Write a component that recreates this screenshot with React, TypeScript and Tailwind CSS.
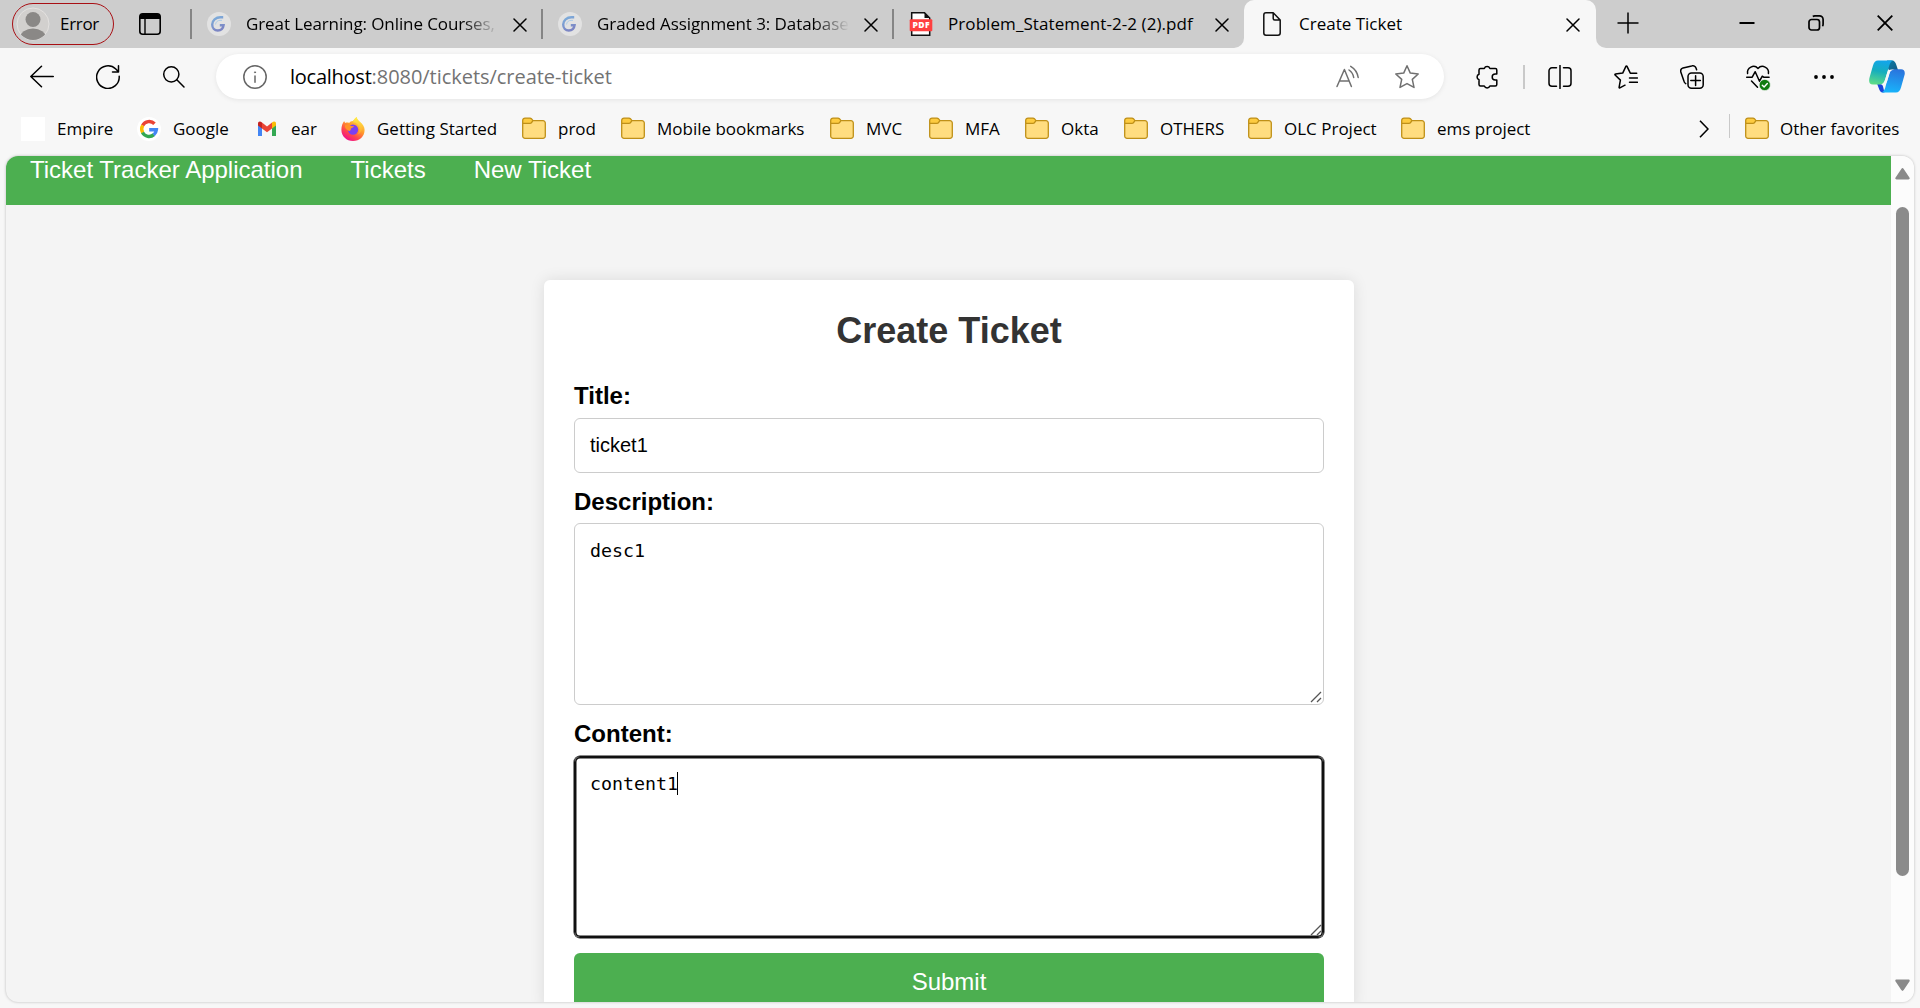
import type { ReactNode } from "react";

function Svg({ children, size = 24, className = "" }: { children: ReactNode; size?: number; className?: string }) {
  return (
    <svg
      width={size}
      height={size}
      viewBox="0 0 24 24"
      fill="none"
      stroke="currentColor"
      strokeWidth="1.5"
      strokeLinecap="round"
      strokeLinejoin="round"
      className={`shrink-0 ${className}`}
    >
      {children}
    </svg>
  );
}

function CloseIcon({ className = "" }: { className?: string }) {
  return (
    <svg width="14" height="14" viewBox="0 0 14 14" stroke="#000" strokeWidth="1.5" strokeLinecap="round" className={`shrink-0 ${className}`}>
      <path d="M1 1l12 12M13 1L1 13" />
    </svg>
  );
}

function LearningIcon() {
  return (
    <svg width="24" height="24" viewBox="0 0 24 24" fill="none" className="shrink-0">
      <defs>
        <linearGradient id="learn" x1="0" y1="0" x2="0.4" y2="1">
          <stop offset="0" stopColor="#7db0dc" />
          <stop offset="1" stopColor="#7c86c4" />
        </linearGradient>
      </defs>
      <circle cx="12" cy="12" r="12" fill="#e2e2e2" />
      <path d="M16.2 5.3h-2.800C8.800 5.300 5.200 8.600 5.200 12.600c0 3.600 2.400 5.900 5.600 5.900 3.600 0 5.400-2.200 5.800-5.300h-3.800" stroke="url(#learn)" strokeWidth="2.400" />
      <path d="M15 8.400h-2c-2.600 0-4.400 1.800-4.400 4.100" stroke="#a9cbe6" strokeWidth="0.900" />
    </svg>
  );
}

function PdfIcon() {
  return (
    <svg width="24" height="24" viewBox="0 0 24 24" className="shrink-0">
      <path d="M2.700 0.800H15.500L20.700 6V23.200H2.700Z" fill="#fff" stroke="#111" strokeWidth="1.500" />
      <path d="M15.500 0.800V6h5.200Z" fill="#111" />
      <rect x="0.700" y="7.300" width="22.600" height="12" rx="1" fill="#ff4040" />
      <text x="12" y="16.400" textAnchor="middle" fontSize="8.500" fontWeight="800" fill="#fff" className="font-['Open_Sans',sans-serif]" textLength="17">
        PDF
      </text>
    </svg>
  );
}

function FolderIcon() {
  return (
    <svg width="24" height="24" viewBox="0 0 24 24" className="shrink-0">
      <path d="M0.700 5.500V19a2.300 2.300 0 0 0 2.300 2.300h18a2.300 2.300 0 0 0 2.300-2.300V6a2.300 2.300 0 0 0-2.300-2.300H11L9.400 1.700A2 2 0 0 0 8 1.100H3A2.300 2.300 0 0 0 0.700 3.400Z" fill="#ffdd80" />
      <path d="M0.700 6.300V3.400A2.300 2.300 0 0 1 3 1.100h5a2 2 0 0 1 1.400.6l1.600 2-1.600 2a2 2 0 0 1-1.400.6Z" fill="#fdcb40" />
      <path
        d="M0.700 6.300h7.300a2 2 0 0 0 1.400-.6l1.600-2M0.700 5.500V19a2.300 2.300 0 0 0 2.300 2.300h18a2.300 2.300 0 0 0 2.300-2.300V6a2.300 2.300 0 0 0-2.300-2.300H11L9.400 1.700A2 2 0 0 0 8 1.100H3A2.300 2.300 0 0 0 0.700 3.400Z"
        fill="none"
        stroke="#bf9018"
        strokeWidth="1.300"
      />
    </svg>
  );
}

function GoogleIcon() {
  return (
    <svg width="24" height="24" viewBox="0 0 24 24" fill="none" strokeWidth="3.400" className="shrink-0">
      <circle cx="12" cy="12" r="12" fill="#fff" />
      <path d="M17.500 6.800A7.400 7.400 0 0 0 5.600 8.500" stroke="#ea4335" />
      <path d="M5.700 8.300a7.400 7.400 0 0 0 0 7.400" stroke="#fbbc05" />
      <path d="M5.500 15.500a7.400 7.400 0 0 0 11.400 2.100" stroke="#34a853" />
      <path d="M16.700 17.800a7.200 7.200 0 0 0 2.700-5.100H12.200" stroke="#4285f4" />
    </svg>
  );
}

function GmailIcon() {
  return (
    <svg width="24" height="24" viewBox="0 0 24 24" className="shrink-0">
      <path d="M3 7v12h4V9.500Z" fill="#4285f4" />
      <path d="M17 9.500V19h4V7Z" fill="#34a853" />
      <path d="M17 5.600v5.900l4-3V6.500c0-2.200-2.300-2.700-4-.9Z" fill="#fbbc04" />
      <path d="M7 5.600v5.900l-4-3V6.500c0-2.200 2.300-2.700 4-.9Z" fill="#c5221f" />
      <path d="M7 5.600l5 3.900 5-3.900v5.900l-5 3.800-5-3.800Z" fill="#ea4335" />
    </svg>
  );
}

function FirefoxIcon() {
  return (
    <svg width="24" height="24" viewBox="0 0 24 24" className="shrink-0">
      <defs>
        <linearGradient id="fox" x1="0.800" y1="0.100" x2="0.250" y2="0.950">
          <stop offset="0" stopColor="#ffe14a" />
          <stop offset="0.400" stopColor="#ff9a2b" />
          <stop offset="0.700" stopColor="#ff4a4a" />
          <stop offset="1" stopColor="#f0108a" />
        </linearGradient>
        <linearGradient id="foxtail" x1="0.500" y1="0" x2="0.500" y2="1">
          <stop offset="0" stopColor="#fff04a" />
          <stop offset="1" stopColor="#ffa02a" />
        </linearGradient>
      </defs>
      <path d="M3.200 4c.2 1 .6 1.500 1.300 2 1-.6 2.500-.6 3.600 0C9 4.800 10 4.200 12 4c1-1.400 2-2.600 3.700-4 .2 2.600 1.500 4 3.300 5.200 3 2 4.600 4.600 4.600 7.800C23.600 19.400 18.500 24 12 24S.4 19.200.4 13C.4 9 1.500 6 3.200 4Z" fill="url(#fox)" />
      <path d="M15.700 0c-2.400 1.800-3.500 3.600-3.500 5.300 3 .2 6.300 2.500 6.300 7.200 0 2-1 4-2 5 4-1.500 5.500-6 4.700-9.500C20.400 5 16 3.500 15.700 0Z" fill="url(#foxtail)" />
      <circle cx="12" cy="12.600" r="5.200" fill="#7a3ff2" />
      <path d="M4 8.200c2-.9 4.500-.6 6 .7l3 .4c0 1.300-2.600 1.500-3 2.300-.3.800 0 1.500-1.200 2.400C5.500 13 3.500 11 4 8.200Z" fill="#ff9328" />
    </svg>
  );
}

function CopilotIcon() {
  return (
    <svg width="36" height="33" viewBox="0 0 36 33" className="shrink-0">
      <defs>
        <linearGradient id="copA" x1="0.500" y1="0" x2="0.300" y2="1">
          <stop offset="0" stopColor="#12a5ea" />
          <stop offset="0.450" stopColor="#16aebd" />
          <stop offset="1" stopColor="#5fdc86" />
        </linearGradient>
        <linearGradient id="copB" x1="0.600" y1="0" x2="0.400" y2="1">
          <stop offset="0" stopColor="#2a74dd" />
          <stop offset="1" stopColor="#18b4fb" />
        </linearGradient>
        <linearGradient id="copC" x1="0" y1="0" x2="1" y2="1">
          <stop offset="0" stopColor="#0b7fa8" />
          <stop offset="1" stopColor="#155a86" />
        </linearGradient>
      </defs>
      <path d="M18 .5h5c2.500 0 3.700 2 4.500 5l1.500 4.500h-9C19.500 9.500 18 7 18 .5Z" fill="url(#copC)" />
      <path d="M8 23.500c3 0 5 0 6 3l1.500 6h-1.500c-2.500 0-3.500-2-4.500-5Z" fill="#1c44d8" />
      <path d="M9 .5h15c-2.500 1-3.300 3.500-4.300 7L16 20c-1 3-2.500 4.500-5.500 4.500H4C0 24.500-.5 21 .7 17L4 5.500C5 2.300 6.500.5 9 .5Z" fill="url(#copA)" />
      <path d="M27 32.500H12.500c2.500-1 3.500-3.500 4.300-7L20.500 13c1-3 2.500-3.700 5-3.700h6.500c3.500 0 4.500 3 3.300 6.500L32 27.500c-1 3.500-2.500 5-5 5Z" fill="url(#copB)" />
      <path d="M22.500 9.500h3c-3 .3-4.200 1.500-5 4l-2.500 8c-.8 2-2 3-4.500 3h-3c3 0 4.500-1.500 5.500-4.500l2.300-7.500c.6-2 1.700-3 4.200-3Z" fill="#f7f7f7" />
    </svg>
  );
}

const inactiveTabs = [
  { title: "Great Learning: Online Courses,", icon: <LearningIcon />, textClass: "tracking-[-0.1px]", fade: true },
  { title: "Graded Assignment 3: Database", icon: <LearningIcon />, textClass: "tracking-[-0.08px]", fade: true },
  { title: "Problem_Statement-2-2 (2).pdf", icon: <PdfIcon />, textClass: "tracking-[0.08px]", fade: false },
];

function TabStrip() {
  return (
    <div className="flex h-12 bg-[#f7f7f7] text-[17px]">
      <div className="flex w-[1244px] items-center rounded-br-[10px] bg-[#cdcdcd]">
        <div className="ml-3 flex h-[42px] w-[102px] items-center rounded-full border-[1.5px] border-[#a80f14] pl-[3px]">
          <svg width="34" height="34" viewBox="0 0 34 34" className="shrink-0">
            <defs>
              <clipPath id="avatar">
                <circle cx="17" cy="17" r="16" />
              </clipPath>
            </defs>
            <circle cx="17" cy="17" r="16" fill="#d2d0ce" stroke="#e4e2e0" />
            <g clipPath="url(#avatar)" fill="#8a8886">
              <circle cx="17" cy="12.500" r="7.500" />
              <ellipse cx="17" cy="31" rx="13" ry="9.500" />
            </g>
          </svg>
          <span className="ml-[10px] tracking-[-0.3px]">Error</span>
        </div>
        <svg width="22" height="22" viewBox="0 0 22 22" fill="none" stroke="#000" strokeWidth="1.600" className="ml-[25px] shrink-0">
          <rect x="0.800" y="0.800" width="20.400" height="20.400" rx="3" />
          <path d="M1 5V3.500A2.500 2.500 0 0 1 3.500 1h15A2.500 2.500 0 0 1 21 3.500V6H1Z" fill="#000" stroke="none" />
          <path d="M6 6v15" strokeWidth="1.400" />
        </svg>
        <div className="ml-[29px] flex">
          {inactiveTabs.map((t, i) => (
            <div key={i} className="flex h-12 w-[351px] items-center">
              <div className="h-[30px] w-[2px] bg-[#858585]" />
              <div className="ml-[15px] flex">{t.icon}</div>
              <div className={`ml-[15px] w-[252px] overflow-hidden whitespace-nowrap pb-px ${t.textClass} ${t.fade ? "[mask-image:linear-gradient(to_right,black_calc(100%-36px),transparent)]" : ""}`}>{t.title}</div>
              <CloseIcon className="ml-[15px] mt-0.5" />
            </div>
          ))}
        </div>
      </div>
      <div className="w-[352px] bg-[linear-gradient(#cdcdcd_50%,#f7f7f7_50%)]">
        <div className="flex h-12 items-center rounded-t-[10px] bg-[#f7f7f7] pl-[19px]">
          <svg width="18" height="24" viewBox="0 0 18 24" fill="none" stroke="#111" strokeWidth="1.500" strokeLinejoin="round" className="shrink-0">
            <path d="M3 .8h7.200L17.200 8v13a2.200 2.200 0 0 1-2.200 2.200H3A2.200 2.200 0 0 1 .8 21V3A2.200 2.200 0 0 1 3 .8ZM10.200 1v5.500a1.500 1.500 0 0 0 1.500 1.500h5.300" />
          </svg>
          <span className="ml-[18px] w-[250px] pb-px">Create Ticket</span>
          <CloseIcon className="ml-[17px] mt-0.5" />
        </div>
      </div>
      <div className="flex flex-1 items-center rounded-bl-[10px] bg-[#cdcdcd] pb-0.5">
        <svg width="22" height="22" viewBox="0 0 22 22" stroke="#000" strokeWidth="1.500" className="ml-[21px]">
          <path d="M11 .5v21M.5 11h21" />
        </svg>
        <svg width="16" height="16" viewBox="0 0 16 16" stroke="#000" strokeWidth="2" className="ml-[100px]">
          <path d="M.5 8h15" />
        </svg>
        <svg width="16" height="16" viewBox="0 0 16 16" fill="none" stroke="#000" strokeWidth="1.700" className="ml-[53px]">
          <rect x="1" y="4.500" width="10.500" height="10.500" rx="2.500" />
          <path d="M4.800 1.500c.7-.5 1.200-.6 2-.6h4.700a3.600 3.600 0 0 1 3.600 3.600v4.700c0 .8-.2 1.500-.7 2" />
        </svg>
        <svg width="16" height="16" viewBox="0 0 16 16" stroke="#000" strokeWidth="1.800" className="ml-[53px]">
          <path d="M.7.7l14.600 14.600M15.300.7L.7 15.300" />
        </svg>
      </div>
    </div>
  );
}

function ToolButton({ children }: { children: ReactNode }) {
  return <div className="flex w-[66px] shrink-0 items-center justify-center">{children}</div>;
}

function Toolbar() {
  return (
    <div className="flex h-[57px] items-center bg-[#f7f7f7] pl-[9px] text-black">
      <ToolButton>
        <Svg><path d="M23.300 11.500H.8M11.500 1.200L.8 11.500l10.700 10.300" /></Svg>
      </ToolButton>
      <ToolButton>
        <Svg><path d="M23.200 11.300A11.300 11.300 0 1 1 19.800 4L22.500 6.800M22.500 .800v6.200h-6" /></Svg>
      </ToolButton>
      <ToolButton>
        <Svg><circle cx="9.300" cy="9.300" r="7.600" /><path d="M14.800 14.800l7.200 7.200" /></Svg>
      </ToolButton>
      <div className="ml-[9px] mr-[10px] flex h-[45px] w-[1228px] shrink-0 items-center rounded-full bg-white pl-[27px] shadow-[0_1px_5px_rgba(0,0,0,0.08)]">
        <Svg className="text-[#666]"><circle cx="12" cy="12" r="11.200" /><path d="M12 11v6.200" /><circle cx="12" cy="7.300" r="0.600" fill="currentColor" strokeWidth="0.800" /></Svg>
        <div className="ml-[23px] w-[1046px] whitespace-nowrap text-[20px] tracking-[-0.04px]">
          <span className="tracking-[-0.25px]">localhost</span><span className="text-[#737373]">:8080/tickets/create-ticket</span>
        </div>
        <Svg className="text-[#707070]">
          <path d="M1 21.500L8.400 4.500l7 17M3.600 16h9.600M13 5a11 11 0 0 1 4.700 7.500M14.700 1.300a15.500 15.500 0 0 1 7.500 11.200" />
        </Svg>
        <Svg className="ml-[35px] text-[#707070]">
          <path d="M12 .8l3.300 7.300 7.900.9-5.900 5.400 1.700 8L12 18.600 5 22.400l1.700-8L.8 9l7.900-.9Z" />
        </Svg>
      </div>
      <ToolButton>
        <Svg>
          <path d="M9.300 3.500a3 3 0 0 1 5.600 0h5.400a1.500 1.500 0 0 1 1.500 1.500v4h-1.600a3 3 0 0 0 0 6h1.600v4.500a1.500 1.500 0 0 1-1.500 1.500h-5.400a3 3 0 0 1-5.600 0H5.500a1.500 1.500 0 0 1-1.500-1.500v-4.700a3 3 0 0 1 0-5.600V5a1.500 1.500 0 0 1 1.500-1.500Z" />
        </Svg>
      </ToolButton>
      <div className="ml-[3px] mr-[2px] h-6 w-0.5 bg-[#c9c9c9]" />
      <ToolButton>
        <Svg><path d="M12 .5v23M8.500 2.800H4A3 3 0 0 0 1 5.800v12.500a3 3 0 0 0 3 3h4.500M15.500 2.800H20a3 3 0 0 1 3 3v12.500a3 3 0 0 1-3 3h-4.500" /></Svg>
      </ToolButton>
      <ToolButton>
        <Svg>
          <path d="M22.700 8.200h-6.400L12.900 1.200a.5.500 0 0 0-.9 0L8.700 8.100l-7.300 1a.5.500 0 0 0-.3.900l5.300 5.100-1.300 7.300a.5.500 0 0 0 .7.500l5.200-2.700M15.500 13h8M15.500 17.300h8" />
        </Svg>
      </ToolButton>
      <ToolButton>
        <Svg>
          <path d="M5.700 18.600A3.500 3.500 0 0 1 3.900 16L.9 7.300A3.500 3.500 0 0 1 3 2.900l8.700-2a3.500 3.500 0 0 1 4.400 2.300l.5 1.500" />
          <rect x="8" y="8" width="15.200" height="15.200" rx="3.500" />
          <path d="M15.600 10.800v9.600M10.800 15.600h9.600" />
        </Svg>
      </ToolButton>
      <ToolButton>
        <Svg className="overflow-visible">
          <path d="M1.600 8.500a6 6 0 0 1 10.400-5 6 6 0 0 1 10.400 5M.7 12.200h5.500l3-5.500 4.300 9.500 2.800-5 1.300 1h5.500M5.500 16l6 6.300" />
          <circle cx="18.800" cy="20" r="5.600" fill="#107c10" stroke="#f7f7f7" strokeWidth="0.600" />
          <path d="M16.300 20.200l1.800 1.800 3.200-3.500" stroke="#fff" strokeWidth="1.400" />
        </Svg>
      </ToolButton>
      <ToolButton>
        <Svg><g fill="currentColor" stroke="none"><circle cx="4" cy="12" r="1.900" /><circle cx="12" cy="12" r="1.900" /><circle cx="20" cy="12" r="1.900" /></g></Svg>
      </ToolButton>
      <div className="flex w-[60px] items-center justify-center"><CopilotIcon /></div>
    </div>
  );
}

const bookmarks = [
  { label: "Empire", width: "w-[116px]", icon: <div className="size-6 bg-white" /> },
  { label: "Google", width: "w-[118px]", icon: <GoogleIcon /> },
  { label: "ear", width: "w-[86px]", icon: <GmailIcon /> },
  { label: "Getting Started", width: "w-[181px]", icon: <FirefoxIcon /> },
  { label: "prod", width: "w-[99px]", icon: <FolderIcon /> },
  { label: "Mobile bookmarks", width: "w-[209px]", icon: <FolderIcon /> },
  { label: "MVC", width: "w-[99px]", icon: <FolderIcon /> },
  { label: "MFA", width: "w-[96px]", icon: <FolderIcon /> },
  { label: "Okta", width: "w-[99px]", icon: <FolderIcon /> },
  { label: "OTHERS", width: "w-[124px]", icon: <FolderIcon /> },
  { label: "OLC Project", width: "w-[153px]", icon: <FolderIcon /> },
  { label: "ems project", width: "w-[298px]", icon: <FolderIcon /> },
];

function BookmarksBar() {
  return (
    <div className="flex h-[51px] items-center bg-[#f7f7f7] pb-[3px] pl-[21px] text-[17px]">
      {bookmarks.map((b) => (
        <div key={b.label} className={`flex shrink-0 items-center ${b.width}`}>
          {b.icon}
          <span className="ml-3 whitespace-nowrap">{b.label}</span>
        </div>
      ))}
      <svg width="10" height="18" viewBox="0 0 10 18" fill="none" stroke="#000" strokeWidth="1.600" className="shrink-0">
        <path d="M1 .8L9 9l-8 8.200" />
      </svg>
      <div className="ml-[20px] mr-[15px] h-6 w-px -mt-1.5 bg-[#c9c9c9]" />
      <FolderIcon />
      <span className="ml-[11px] whitespace-nowrap">Other favorites</span>
    </div>
  );
}

function ResizeHandle() {
  return (
    <svg width="12" height="12" viewBox="0 0 12 12" stroke="#555" strokeWidth="1.300" className="absolute bottom-px right-px">
      <path d="M1 11L11 1M7 11l4-4" />
    </svg>
  );
}

function Label({ children }: { children: ReactNode }) {
  return <div className="h-[27px] text-[24px] font-bold leading-[27px] text-black">{children}</div>;
}

function TicketForm() {
  return (
    <div className="w-[810px] shrink-0 rounded-md bg-white px-[30px] pt-[30px] shadow-[0_0_15px_rgba(0,0,0,0.1)]">
      <h2 className="text-center text-[36px] font-bold leading-[41px] text-[#333]">Create Ticket</h2>
      <div className="mt-[31px]">
        <Label>Title:</Label>
        <div role="textbox" className="mt-[9px] h-[55px] rounded-md border border-[#ccc] pl-[15px] text-[20px] leading-[53px]">ticket1</div>
      </div>
      <div className="mt-[15px]">
        <Label>Description:</Label>
        <div role="textbox" className="relative mt-[8px] h-[182px] rounded-md border border-[#ccc] pl-[15px] pt-[15px] font-['DejaVu_Sans_Mono',monospace] text-[18.3px] leading-6">
          desc1
          <ResizeHandle />
        </div>
      </div>
      <div className="mt-[15px]">
        <Label>Content:</Label>
        <div role="textbox" className="relative mt-[9px] flex h-[182px] items-start rounded-md border border-[#101010] pl-[15px] pt-[15px] font-['DejaVu_Sans_Mono',monospace] text-[18.3px] leading-6 shadow-[inset_0_0_0_1.5px_#101010,0_0_0_0.5px_#101010]">
          content1
          <span className="-ml-px h-[23px] w-px bg-black" />
          <ResizeHandle />
        </div>
      </div>
      <div role="button" className="mt-[15px] flex h-[58px] items-center justify-center rounded-md bg-[#4caf50] text-[24px] text-white">Submit</div>
    </div>
  );
}

function PageView() {
  return (
    <div className="ml-[6px] flex h-[846px] w-[1908px] overflow-hidden rounded-xl bg-[#f4f4f4] font-['Liberation_Sans',Arial,sans-serif] shadow-[0_0_3px_rgba(0,0,0,0.25)]">
      <div className="flex min-w-0 flex-1 flex-col">
        <nav className="flex h-[49px] shrink-0 gap-12 bg-[#4caf50] pl-6 text-[24px] leading-[28px] text-white">
          <span>Ticket Tracker Application</span>
          <span>Tickets</span>
          <span>New Ticket</span>
        </nav>
        <main className="flex min-h-0 flex-1 items-start justify-center pl-px pt-[75px]">
          <TicketForm />
        </main>
      </div>
      <div className="flex w-[23px] shrink-0 flex-col items-center bg-[#fcfcfc] pt-3">
        <svg width="15" height="12" viewBox="0 0 15 12" fill="#8a8a8a"><path d="M6.300.9a1.500 1.500 0 0 1 2.400 0l5.700 8.500c.7 1 .2 2.100-1 2.100H1.600c-1.200 0-1.700-1.100-1-2.100Z" /></svg>
        <div className="mt-[27px] h-[669px] w-[13px] rounded-full bg-[#8b8b8b]" />
        <svg width="15" height="12" viewBox="0 0 15 12" fill="#8a8a8a" className="mt-[103px]"><path d="M6.300 11.100a1.500 1.500 0 0 0 2.400 0l5.700-8.500c.7-1 .2-2.100-1-2.100H1.600C.4.500-.1 1.600.6 2.600Z" /></svg>
      </div>
    </div>
  );
}

export default function App() {
  return (
    <div className="flex h-[1008px] w-[1920px] flex-col overflow-hidden bg-[#f7f7f7] font-['Open_Sans','Noto_Sans',sans-serif] text-black">
      <TabStrip />
      <Toolbar />
      <BookmarksBar />
      <PageView />
    </div>
  );
}
